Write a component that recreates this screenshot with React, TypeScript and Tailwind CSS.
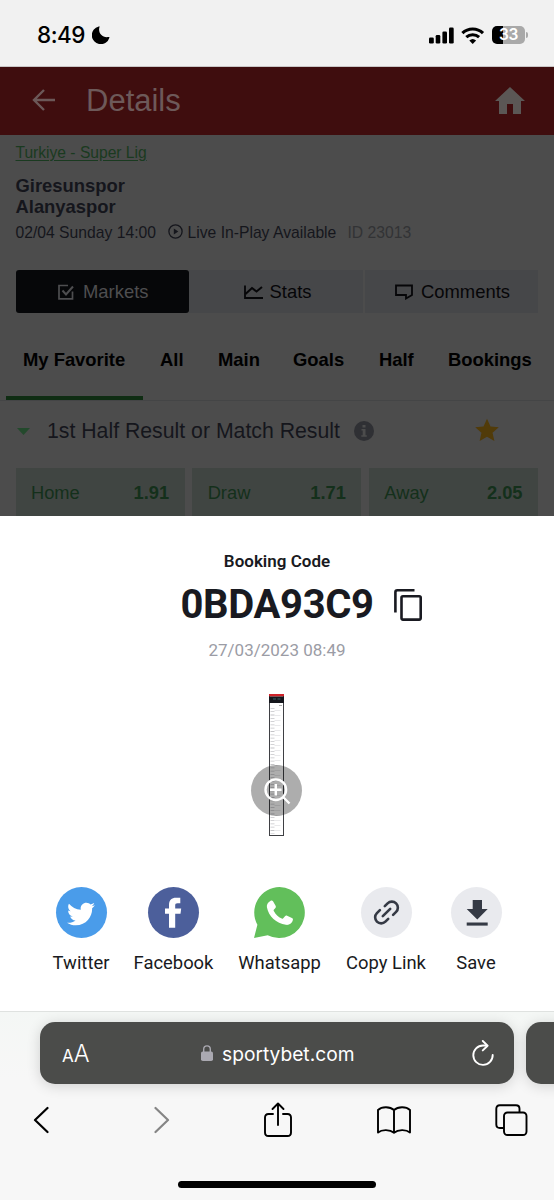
import type { ReactNode } from "react";
import { FaTwitter } from "react-icons/fa";

type ShareItem = {
  name: string;
  width: string;
  icon: ReactNode;
};

const marketTabs = [
  { name: "My Favorite", width: "w-[103px]" },
  { name: "All", width: "w-[24px]" },
  { name: "Main", width: "w-[41px]" },
  { name: "Goals", width: "w-[52px]" },
  { name: "Half", width: "w-[35px]" },
  { name: "Bookings", width: "w-[85px]" },
];

const odds = [
  { name: "Home", value: "1.91" },
  { name: "Draw", value: "1.71" },
  { name: "Away", value: "2.05" },
];

const WhatsappIcon = () => (
  <svg viewBox="0 0 51 51" className="size-[51px]">
    <path fill="#62bf5b" d="M25.5 0a25.5 25.5 0 1 1-11.8 48.2L0 51l3.4-13.2A25.5 25.5 0 0 1 25.5 0z" />
    <path
      fill="#fff"
      d="M16.4 13.9c.8-.6 2-.6 2.6.3l2.6 4.5c.5.9.3 1.8-.4 2.5l-1.4 1.5c-.3.4-.3.8 0 1.3 1.9 3.6 4.4 6 7.9 7.6.5.2.9.2 1.3-.2l2-2.2c.6-.6 1.3-.8 2.1-.4l4.8 2.3c.8.4 1.2 1.1 1 2-.7 3.2-3.6 5.2-7 4.700C22.4 36.500 14.600 29.300 12.900 20.200c-.4-2.600.8-5 3.500-6.300z"
    />
  </svg>
);

const shareItems: ShareItem[] = [
  {
    name: "Twitter",
    width: "w-[57px]",
    icon: (
      <div className="flex size-[51px] items-center justify-center rounded-full bg-[#4a9cea]">
        <FaTwitter className="mt-0.5 size-[28px] text-white" />
      </div>
    ),
  },
  {
    name: "Facebook",
    width: "w-[80px]",
    icon: (
      <div className="flex size-[51px] items-center justify-center rounded-full bg-[#4c5f9b]">
        <svg viewBox="0 0 51 51" className="size-[51px]" fill="#fff">
          <path d="M21 40.800V26.800h-4v-5.300h4v-3.500c0-5 2.700-7.300 7-7.300h4.300v5.500h-2.700c-2 0-2.400.9-2.400 2.300v3h6l-.7 5.300h-5.300v14z" />
        </svg>
      </div>
    ),
  },
  { name: "Whatsapp", width: "w-[84px]", icon: <WhatsappIcon /> },
  {
    name: "Copy Link",
    width: "w-[81px]",
    icon: (
      <div className="size-[51px] rounded-full bg-[#e9eaee]">
        <svg viewBox="0 0 51 51" className="size-[51px]" fill="none" stroke="#353a45" strokeWidth="2.600" strokeLinecap="round">
          <path d="M21.800 29.200l7.400-7.400" />
          <path d="M23.800 19.200l2.800-2.800a6 6 0 0 1 8.500 8.500l-3 3" />
          <path d="M27.200 31.800l-2.800 2.800a6 6 0 0 1-8.500-8.500l3-3" />
        </svg>
      </div>
    ),
  },
  {
    name: "Save",
    width: "w-[51px]",
    icon: (
      <div className="size-[51px] rounded-full bg-[#e9eaee]">
        <svg viewBox="0 0 51 51" className="size-[51px]" fill="#353a45">
          <path d="M21.700 13h9.300v9h5.700L26.300 32.500 15.700 22h6z" />
          <path d="M15.700 35.500h21v3.100h-21z" />
        </svg>
      </div>
    ),
  },
];

const StatusBar = () => (
  <div className="flex h-[67px] items-center justify-between border-b border-[#c9c6c6] bg-[#f1f1f1] pt-1 pr-[26px] pl-[37px] font-['Inter',sans-serif] text-black">
    <div className="flex items-center gap-[5px]">
      <span className="w-[50px] text-[22.500px] leading-7 font-medium tracking-[-0.500px] whitespace-nowrap">8:49</span>
      <svg viewBox="0 0 18 18" className="size-[18px]">
        <path d="M6.800.400c.5-.3.900.1.700.6C5.700 6.500 9.900 12.200 16.700 11c.7-.1 1 .3.700.8A9 9 0 1 1 6.800.400z" />
      </svg>
    </div>
    <div className="flex items-center">
      <svg viewBox="0 0 25 17" className="h-[17px] w-[25px]">
        <rect x="0" y="10.500" width="4.800" height="6" rx="1.300" />
        <rect x="6.700" y="8" width="4.600" height="8.500" rx="1.300" />
        <rect x="13.400" y="4.400" width="4.600" height="12.100" rx="1.300" />
        <rect x="20" y="0.500" width="4.700" height="16" rx="1.300" />
      </svg>
      <svg viewBox="0 0 24 17" className="ml-[7px] h-[17px] w-[24px]" fill="none" stroke="#000">
        <path d="M1.400 6.100a15 15 0 0 1 20.600 0" strokeWidth="3.200" />
        <path d="M5.300 10.200a9.300 9.300 0 0 1 12.800 0" strokeWidth="3" />
        <path d="M11.700 17l-3.400-3.500a5 5 0 0 1 6.800 0z" fill="#000" stroke="none" />
      </svg>
      <div className="ml-[7px] flex h-[18px] w-[33px] items-center justify-center rounded-[5px] bg-[linear-gradient(90deg,#000_33%,#a9a9a9_33%)] text-[15.500px] leading-none font-semibold tracking-[-0.300px] text-white">
        33
      </div>
      <div className="ml-px h-[6px] w-[2px] rounded-r-full bg-[#a9a9a9]" />
    </div>
  </div>
);

const Header = () => (
  <div className="flex h-[68px] items-center bg-[#3f0d0e] pr-[29px] pb-[2px] pl-[32px]">
    <svg viewBox="0 0 24 22" className="h-[22px] w-[24px]" fill="none" stroke="#6c5858" strokeWidth="2.400">
      <path d="M23 11H2M12 1L2 11l10 10" />
    </svg>
    <span className="ml-[30px] text-[31px] leading-none text-[#6d5959]">Details</span>
    <svg viewBox="0 0 30 27" className="ml-auto h-[27px] w-[30px]" fill="#5b5755">
      <path d="M15 0l15 14h-4v13h-8V17h-6v10H4V14H0z" />
    </svg>
  </div>
);

const MatchInfo = () => (
  <div className="h-[135px] pt-[8px] pl-[15.500px]">
    <div className="text-[15.600px] leading-5 text-[#1a3a20] underline underline-offset-2">Turkiye - Super Lig</div>
    <div className="mt-[12px] text-[18.400px] leading-[21px] font-bold text-[#15161c]">
      Giresunspor
      <br />
      Alanyaspor
    </div>
    <div className="mt-[6px] flex items-center text-[15.700px] leading-5 whitespace-nowrap text-[#15161c]">
      <span className="w-[152px]">02/04 Sunday 14:00</span>
      <svg viewBox="0 0 15 15" className="-mt-[3px] size-[15px]">
        <circle cx="7.500" cy="7.500" r="6.600" fill="none" stroke="#15161c" strokeWidth="1.300" />
        <path d="M5.800 4.600v5.800l4.500-2.900z" fill="#15161c" />
      </svg>
      <span className="ml-[5px] w-[160px]">Live In-Play Available</span>
      <span className="text-[#323335]">ID 23013</span>
    </div>
  </div>
);

const ViewSwitch = () => (
  <div className="flex h-[43px] pr-[16px] pl-[15.500px] text-[18.400px] text-[#060608]">
    <div className="flex w-[173.500px] items-center justify-center rounded-[3px] bg-[#060709] pt-px pl-[2px] text-[#4e4e50]">
      <svg viewBox="0 0 16 16" className="mr-[9px] size-[16px]" fill="none" stroke="currentColor" strokeWidth="1.700">
        <path d="M10 1.500H1v13.300h13.500V7.500" />
        <path d="M4.500 6.500l3.500 4L15 2.500" strokeWidth="2" />
      </svg>
      Markets
    </div>
    <div className="mr-[2px] flex w-[174px] items-center justify-center bg-[#464749] pt-px pl-[3px]">
      <svg viewBox="0 0 19 14" className="mr-[7px] h-[14px] w-[19px]" fill="none" stroke="currentColor" strokeWidth="1.800">
        <path d="M1 .5V13h18" />
        <path d="M1.500 9L8 3l4.500 3.500L18 2" strokeWidth="2" />
      </svg>
      Stats
    </div>
    <div className="flex flex-1 items-center justify-center bg-[#464749] pt-px pl-[2px]">
      <svg viewBox="0 0 18 16" className="mr-[8px] h-[16px] w-[18px]" fill="none" stroke="currentColor" strokeWidth="1.800">
        <path d="M1 1.500h16v9.500l-6 3.500V11H1z" />
      </svg>
      Comments
    </div>
  </div>
);

const Markets = () => (
  <>
    <div className="flex h-[88px] border-b border-[#444546] pl-[6px] text-[18.400px] font-bold whitespace-nowrap text-black">
      {marketTabs.map((tab, index) => (
        <div
          key={tab.name}
          className={`flex h-[87px] shrink-0 items-center justify-center border-b-4 px-[17px] pt-[10px] ${
            index === 0 ? "border-[#0f2d13]" : "border-transparent"
          }`}
        >
          <span className={tab.width}>{tab.name}</span>
        </div>
      ))}
    </div>
    <div className="flex h-[67px] items-start px-[17px] pt-[18px] leading-6">
      <svg viewBox="0 0 13 7" className="mt-[9px] h-[7px] w-[13px]">
        <path d="M0 0h13L6.500 7z" fill="#23492c" />
      </svg>
      <span className="ml-[17px] w-[307px] text-[21.250px] whitespace-nowrap text-[#15161c]">1st Half Result or Match Result</span>
      <svg viewBox="0 0 20 20" className="mt-[2px] size-[20px]">
        <circle cx="10" cy="10" r="10" fill="#2f3034" />
        <path d="M8.500 4h3v2.500h-3zM7.500 8h4v6.300h1.300v1.500H7.300v-1.500h1.400V9.500H7.500z" fill="#4c4c4c" />
      </svg>
      <svg viewBox="0 0 24 24" className="-mt-px ml-[101px] size-[24px]" fill="#513b09">
        <path d="M12 .7l3.500 7.700 8.300.8-6.300 5.600 1.900 8.300L12 18.800l-7.400 4.300 1.900-8.300L.2 9.200l8.300-.8z" />
      </svg>
    </div>
    <div className="flex h-[48px] gap-[7.500px] pr-[16px] pl-[15.500px] text-[18.300px] text-[#14301b]">
      {odds.map((odd) => (
        <div key={odd.name} className="flex flex-1 items-center justify-between bg-[#404542] px-[15.500px] pt-px">
          <span>{odd.name}</span>
          <span className="font-bold">{odd.value}</span>
        </div>
      ))}
    </div>
  </>
);

const SlipPreview = () => (
  <div className="relative mt-[33px] flex h-[142px] w-full justify-center pr-px">
    <svg viewBox="0 0 15 142" className="h-[142px] w-[15px]">
      <rect x="0.500" y="0.500" width="14" height="141" fill="#fff" stroke="#3f4044" />
      <rect width="15" height="2.500" fill="#cf2229" />
      <rect y="2.500" width="15" height="6.500" fill="#15161c" />
      <path d="M4 5h3M8.500 5h3" stroke="#386064" />
      <path d="M10 11.500h3" stroke="#888" strokeWidth=".7" />
      <path d="M3.500 14V140" stroke="#c4c4c7" strokeWidth="4" strokeDasharray=".8 2.500" />
      <path d="M8.500 16V140" stroke="#e2e2e5" strokeWidth="6" strokeDasharray=".7 4.300" />
    </svg>
    <div className="absolute top-[71px] flex size-[51px] items-center justify-center rounded-full bg-black/32">
      <svg viewBox="0 0 28 28" className="mt-0.5 size-[28px]" fill="none" stroke="#fff" strokeWidth="2.400">
        <circle cx="12.800" cy="11.700" r="10.300" />
        <path d="M20 19l6.500 6.500M7 11.700h11.600M12.800 6v11.500" />
      </svg>
    </div>
  </div>
);

const BookingSheet = () => (
  <div className="flex h-[495px] flex-col items-center bg-white font-['Roboto',sans-serif] text-[#191a21]">
    <div className="mt-[35px] text-[17px] leading-5 font-semibold">Booking Code</div>
    <div className="mt-[11px] ml-[48px] flex h-[46px] items-center">
      <span className="w-[194px] text-[40px] font-bold tracking-[-0.350px] whitespace-nowrap">0BDA93C9</span>
      <svg viewBox="0 0 28 32" className="ml-[19px] h-[32px] w-[28px]" fill="none" stroke="currentColor" strokeWidth="2.600">
        <path d="M1.400 23.500V3.300q0-2 2-2H20.500" />
        <rect x="7.500" y="7.300" width="19.200" height="23.300" rx="1.500" />
      </svg>
    </div>
    <div className="mt-[11px] text-[17px] leading-[22px] text-[#9b9ca5]">27/03/2023 08:49</div>
    <SlipPreview />
    <div className="mt-[51px] flex gap-[24px] self-start pl-[52.500px]">
      {shareItems.map((item) => (
        <div key={item.name} className={`flex flex-col items-center gap-[13px] ${item.width}`}>
          {item.icon}
          <span className="text-[18.400px] leading-6 whitespace-nowrap">{item.name}</span>
        </div>
      ))}
    </div>
  </div>
);

const BrowserBar = () => (
  <div className="flex h-[189px] flex-col overflow-hidden border-t border-[#dfe2e0] bg-[linear-gradient(#f4f7f5,#f7f7f7_35%)] font-['Inter',sans-serif]">
    <div className="mt-[10px] flex gap-[12px] pl-[40px]">
      <div className="flex h-[62px] w-[474px] shrink-0 items-center rounded-[15px] bg-[#4b4c4a] pr-[20px] pl-[22px] text-white shadow-[0_2px_14px_rgba(0,0,0,0.16)]">
        <div className="flex items-baseline pt-px">
          <span className="text-[17px] leading-none">A</span>
          <span className="text-[23.500px] leading-none font-light">A</span>
        </div>
        <svg viewBox="0 0 12 16" className="ml-auto h-[16px] w-[12px]">
          <rect y="6.500" width="12" height="9.500" rx="1.800" fill="#aaa9b1" />
          <path d="M2.700 7V4.200a3.300 3.300 0 0 1 6.600 0V7" fill="none" stroke="#aaa9b1" strokeWidth="1.400" />
        </svg>
        <span className="mt-[3px] mr-[115px] ml-[9px] w-[135px] text-[19.200px] whitespace-nowrap">sportybet.com</span>
        <svg viewBox="0 0 22 26" className="h-[26px] w-[22px]" fill="none" stroke="#fff" strokeWidth="1.900" strokeLinecap="round" strokeLinejoin="round">
          <path d="M14.500 5.500H11A9.700 9.700 0 1 0 20.700 15" />
          <path d="M10.800 1l4.800 4.700-4.800 4.700" />
        </svg>
      </div>
      <div className="h-[62px] w-[60px] shrink-0 rounded-[15px] bg-[#4b4c4a] shadow-[0_2px_14px_rgba(0,0,0,0.16)]" />
    </div>
    <div className="mt-[18px] flex h-[36px] items-center justify-between pr-[26px] pl-[24px] text-black">
      <div className="flex w-[34px] justify-center">
        <svg viewBox="0 0 16 28" className="h-[28px] w-[16px]" fill="none" stroke="currentColor" strokeWidth="2.200" strokeLinecap="round" strokeLinejoin="round">
          <path d="M14.500 2L2 14l12.500 12" />
        </svg>
      </div>
      <div className="flex w-[34px] justify-center pl-[6px]">
        <svg viewBox="0 0 16 28" className="h-[28px] w-[16px] text-[#858585]" fill="none" stroke="currentColor" strokeWidth="2.200" strokeLinecap="round" strokeLinejoin="round">
          <path d="M1.500 2L14 14 1.500 26" />
        </svg>
      </div>
      <div className="flex w-[34px] justify-center pl-[2px]">
        <svg viewBox="0 0 28 36" className="h-[36px] w-[28px]" fill="none" stroke="currentColor" strokeWidth="1.900" strokeLinecap="round" strokeLinejoin="round">
          <path d="M9 12H4.500Q1 12 1 15.500v15Q1 34 4.500 34h19q3.500 0 3.500-3.500v-15Q27 12 23.500 12H19" />
          <path d="M14 23V2M8.500 7L14 1.500 19.500 7" />
        </svg>
      </div>
      <svg viewBox="0 0 34 28" className="h-[28px] w-[34px]" fill="none" stroke="currentColor" strokeWidth="1.900" strokeLinejoin="round">
        <path d="M17 4C13 .5 5 .3 1 4v22.500c4-3.300 12-3 16 .2 4-3.200 12-3.500 16-.2V4C29 .3 21 .5 17 4zM17 4v22.500" />
      </svg>
      <svg viewBox="0 0 33 32" className="h-[32px] w-[33px]" fill="none" stroke="currentColor" strokeWidth="1.900">
        <rect x="9" y="8.500" width="22.500" height="22.500" rx="3.500" />
        <path d="M9 24H4.800Q1.300 24 1.300 20.500V4.800Q1.300 1.300 4.800 1.300H21Q24.500 1.300 24.500 4.800V8.500" />
      </svg>
    </div>
    <div className="mt-[43px] h-[7px] w-[198px] self-center rounded-full bg-black" />
  </div>
);

export default function App() {
  return (
    <div className="h-[1200px] w-[554px] overflow-hidden bg-[#4c4c4c] font-['Liberation_Sans',sans-serif]">
      <StatusBar />
      <Header />
      <MatchInfo />
      <ViewSwitch />
      <Markets />
      <BookingSheet />
      <BrowserBar />
    </div>
  );
}
